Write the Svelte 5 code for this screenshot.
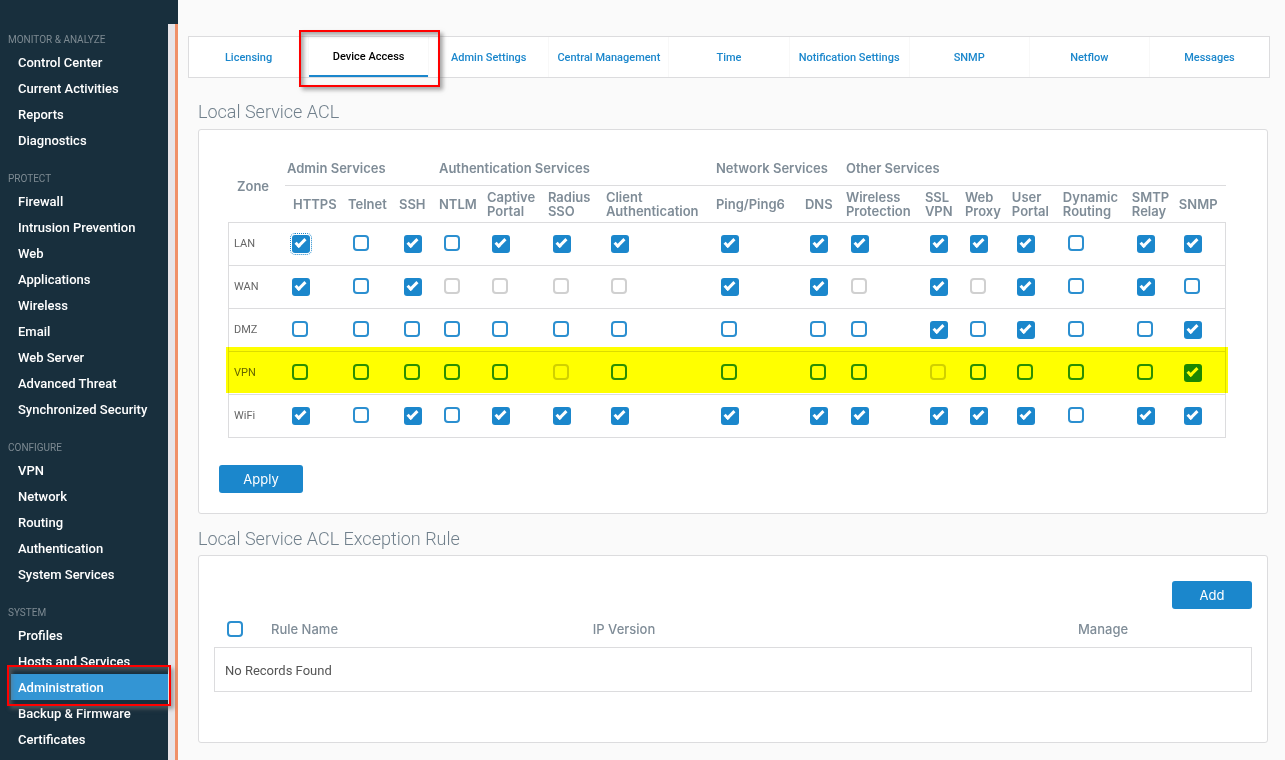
<script>
  const menu = [
    { title: 'Monitor & Analyze', items: ['Control Center', 'Current Activities', 'Reports', 'Diagnostics'] },
    {
      title: 'Protect',
      items: ['Firewall', 'Intrusion Prevention', 'Web', 'Applications', 'Wireless', 'Email', 'Web Server', 'Advanced Threat', 'Synchronized Security'],
    },
    { title: 'Configure', items: ['VPN', 'Network', 'Routing', 'Authentication', 'System Services'] },
    { title: 'System', items: ['Profiles', 'Hosts and Services', 'Administration', 'Backup & Firmware', 'Certificates'] },
  ]

  const tabs = ['Licensing', 'Device Access', 'Admin Settings', 'Central Management', 'Time', 'Notification Settings', 'SNMP', 'Netflow', 'Messages']

  const groups = [
    { label: 'Admin Services', span: 3 },
    { label: 'Authentication Services', span: 4 },
    { label: 'Network Services', span: 2 },
    { label: 'Other Services', span: 7 },
  ]

  const services = [
    { lines: ['HTTPS'], width: 57 },
    { lines: ['Telnet'], width: 51 },
    { lines: ['SSH'], width: 40 },
    { lines: ['NTLM'], width: 48 },
    { lines: ['Captive', 'Portal'], width: 61 },
    { lines: ['Radius', 'SSO'], width: 58 },
    { lines: ['Client', 'Authentication'], width: 110 },
    { lines: ['Ping/Ping6'], width: 89 },
    { lines: ['DNS'], width: 41 },
    { lines: ['Wireless', 'Protection'], width: 79 },
    { lines: ['SSL', 'VPN'], width: 40 },
    { lines: ['Web', 'Proxy'], width: 47 },
    { lines: ['User', 'Portal'], width: 51 },
    { lines: ['Dynamic', 'Routing'], width: 69 },
    { lines: ['SMTP', 'Relay'], width: 47 },
    { lines: ['SNMP'], width: 53 },
  ]
  const zoneWidth = 57
  const totalWidth = services.reduce((sum, s) => sum + s.width, zoneWidth)
  const share = (w) => `${(w / totalWidth) * 100}%`

  // x = allowed, o = not allowed, - = not available for the zone
  const zones = $state([
    { name: 'LAN', access: [...'xoxoxxxxxxxxxoxx'] },
    { name: 'WAN', access: [...'xox----xx-x-xoxo'] },
    { name: 'DMZ', access: [...'ooooooooooxoxoox'] },
    { name: 'VPN', access: [...'ooooo-oooo-oooox'] },
    { name: 'WiFi', access: [...'xoxoxxxxxxxxxoxx'] },
  ])

  let activeTab = $state('Device Access')
  let activeItem = $state('Administration')
  let selectAll = $state(false)

  function toggle(zone, i) {
    zone.access[i] = zone.access[i] === 'x' ? 'o' : 'x'
  }
</script>

<svelte:head>
  <title>Administration - Device Access</title>
</svelte:head>

<div class="page">
  <aside class="sidebar">
    <div class="sidebar-top"></div>
    <div class="sidebar-body">
      <nav class="menu" aria-label="Main menu">
        {#each menu as section}
          <section>
            <h3>{section.title}</h3>
            <ul>
              {#each section.items as item}
                <li class:active={item === activeItem}>
                  <a href="#menu" onclick={() => (activeItem = item)}>{item}</a>
                  {#if item === 'Administration'}
                    <span class="callout menu-callout"></span>
                  {/if}
                </li>
              {/each}
            </ul>
          </section>
        {/each}
      </nav>
    </div>
  </aside>

  <main>
    <nav class="tabs" aria-label="Administration">
      {#each tabs as tab}
        <div class="tab" class:active={tab === activeTab}>
          <a href="#tab" onclick={() => (activeTab = tab)}>{tab}</a>
          {#if tab === 'Device Access'}
            <span class="callout tab-callout"></span>
          {/if}
        </div>
      {/each}
    </nav>

    <div class="content">
      <h2>Local Service ACL</h2>
      <div class="panel">
        <div class="acl-wrap">
          <table class="acl">
            <colgroup>
              <col style:width={share(zoneWidth)} />
              {#each services as s}
                <col style:width={share(s.width)} />
              {/each}
            </colgroup>
            <thead>
              <tr>
                <th rowspan="2" class="zone">Zone</th>
                {#each groups as g, i}
                  <th colspan={g.span} class="group" class:first={i === 0}>{g.label}</th>
                {/each}
              </tr>
              <tr>
                {#each services as s, i}
                  <th class:first={i === 0}>
                    {#each s.lines as line}<span>{line}</span>{/each}
                  </th>
                {/each}
              </tr>
            </thead>
            <tbody>
              {#each zones as zone}
                <tr class:highlight={zone.name === 'VPN'}>
                  <td class="name">{zone.name}</td>
                  {#each zone.access as value, i}
                    <td class:first={i === 0}>
                      <input
                        type="checkbox"
                        class:focused={zone.name === 'LAN' && i === 0}
                        aria-label="{zone.name} {services[i].lines.join(' ')}"
                        checked={value === 'x'}
                        disabled={value === '-'}
                        onchange={() => toggle(zone, i)}
                      />
                    </td>
                  {/each}
                </tr>
              {/each}
            </tbody>
          </table>
        </div>
        <button class="apply">Apply</button>
      </div>

      <h2>Local Service ACL Exception Rule</h2>
      <div class="panel rules-panel">
        <div class="actions">
          <button>Add</button>
        </div>
        <table class="rules">
          <thead>
            <tr>
              <th class="check"><input type="checkbox" aria-label="Select all rules" bind:checked={selectAll} /></th>
              <th class="rule-name">Rule Name</th>
              <th>IP Version</th>
              <th class="manage">Manage</th>
            </tr>
          </thead>
          <tbody>
            <tr>
              <td colspan="4">No Records Found</td>
            </tr>
          </tbody>
        </table>
      </div>
    </div>
  </main>
</div>

<style>
  :global(body) {
    background: #fafafa;
    font-family: Roboto, 'Liberation Sans', sans-serif;
    font-size: 13px;
  }

  .page {
    display: flex;
    min-height: 100vh;
  }

  a { text-decoration: none; }

  /* Sidebar */
  .sidebar {
    width: 178px;
    flex-shrink: 0;
    display: flex;
    flex-direction: column;
  }

  .sidebar-top {
    height: 24px;
    background: #182f3d;
  }

  .sidebar-body {
    flex: 1;
    display: flex;
    background: #e7e4e8;
    border-right: 3px solid #f09068;
  }

  .menu {
    width: 168px;
    padding-top: 5px;
    background: #182f3d;
    box-sizing: border-box;
  }

  .menu section { margin-bottom: 15px; }
  .menu section:last-child { margin-bottom: 0; }

  .menu h3 {
    margin: 0;
    padding: 2px 0 0 8px;
    font-size: 10px;
    font-weight: 400;
    line-height: 18px;
    text-transform: uppercase;
    color: #7d8a92;
  }

  .menu ul {
    list-style: none;
    margin: 0 0 0 11px;
    padding: 0;
  }

  .menu li { position: relative; }
  .menu li.active { background: #3395d4; }

  .menu li a {
    display: block;
    padding: 2px 0 0 7px;
    line-height: 24px;
    font-weight: 500;
    color: #fff;
    white-space: nowrap;
  }

  .callout {
    position: absolute;
    z-index: 2;
    border: 2px solid #f00;
    box-shadow: 3px 3px 4px rgba(110, 110, 110, 0.6), inset 3px 3px 4px rgba(110, 110, 110, 0.6);
    pointer-events: none;
  }

  .menu-callout { inset: -9px -3px -6px -4px; }
  .tab-callout { inset: -7px -12px -10px -10px; }

  /* Tabs */
  main {
    flex: 1;
    min-width: 0;
    padding: 36px 15px 16px 10px;
  }

  .tabs {
    display: flex;
    border: 1px solid #dcdcde;
    background: #fff;
  }

  .tab {
    flex: 1 1 0;
    min-width: 0;
    position: relative;
    border-right: 1px solid #f8f8f8;
  }

  .tab:last-child { border-right: 0; }

  .tab a {
    display: block;
    padding-top: 2px;
    line-height: 38px;
    font-size: 11px;
    font-weight: 500;
    text-align: center;
    white-space: nowrap;
    color: #1b87cc;
  }

  .tab.active a {
    line-height: 36px;
    border-bottom: 2px solid #1b87cc;
    color: #000;
  }

  /* Panels */
  .content { margin: 0 2px 0 10px; }

  h2 {
    margin: 0;
    padding: 22px 0 5px;
    font-size: 18px;
    font-weight: 300;
    line-height: 24px;
    color: #71808c;
  }

  .panel + h2 { padding: 13px 0 4px; }

  .panel {
    padding: 20px;
    background: #fff;
    border: 1px solid #dcdcde;
    border-radius: 3px;
  }

  .acl-wrap { margin: 0 21px 27px 9px; }

  table {
    width: 100%;
    table-layout: fixed;
    border-spacing: 0;
  }

  th {
    font-family: Inter, Roboto, sans-serif;
    font-size: 13px;
    font-weight: 600;
    line-height: 14px;
    text-align: left;
    white-space: nowrap;
    color: #7f8c97;
  }

  .acl th {
    height: 36px;
    padding: 0 0 0 6px;
    box-sizing: border-box;
  }

  .acl th span { display: block; }
  .acl th.zone { padding-left: 9px; }
  .acl th.group { border-bottom: 1px solid #dcdcde; }
  .acl th.group.first { padding-left: 2px; }
  .acl th.first { padding-left: 8px; }

  .acl td {
    height: 43px;
    padding: 12px 0 0 11px;
    box-sizing: border-box;
    vertical-align: top;
    border-top: 1px solid #dcdcde;
  }

  .acl td.first { padding-left: 7px; }

  .acl td.name {
    padding: 0 0 2px 5px;
    vertical-align: middle;
    border-left: 1px solid #dcdcde;
    font-size: 11px;
    color: #666;
  }

  .acl td:last-child { border-right: 1px solid #dcdcde; }

  .acl tbody tr:last-child td {
    height: 44px;
    border-bottom: 1px solid #dcdcde;
  }

  .highlight { position: relative; }

  .highlight .name::after {
    content: '';
    position: absolute;
    z-index: 1;
    inset: -4px -2px 1px -2px;
    background: #ff0;
    mix-blend-mode: multiply;
    pointer-events: none;
  }

  input[type='checkbox'] {
    appearance: none;
    display: block;
    width: 16px;
    height: 16px;
    margin: 0;
    box-sizing: border-box;
    border: 2px solid #2b8fd0;
    border-radius: 4px;
    background: #fff;
  }

  input[type='checkbox']:disabled { border-color: #d0d0d0; }

  input[type='checkbox']:checked {
    position: relative;
    width: 18px;
    height: 18px;
    border: 0;
    border-radius: 3px;
    background: #1b87cc;
  }

  input[type='checkbox']:checked::after {
    content: '';
    position: absolute;
    left: 3px;
    top: 4px;
    width: 8px;
    height: 3px;
    border-left: 3px solid #fff;
    border-bottom: 3px solid #fff;
    transform: rotate(-45deg);
  }

  input.focused {
    outline: 1px dotted #1b87cc;
    outline-offset: 1px;
  }

  button {
    min-width: 80px;
    height: 28px;
    padding: 0 24px;
    border: 0;
    border-radius: 3px;
    background: #1b87cc;
    color: #fff;
    font-family: Inter, Roboto, sans-serif;
    font-size: 13px;
  }

  .apply {
    display: block;
    min-width: 84px;
  }

  /* Exception rules */
  .rules-panel { padding: 25px 15px 50px; }

  .actions {
    display: flex;
    justify-content: flex-end;
  }

  .rules th {
    height: 38px;
    padding: 2px 0 0 6px;
    box-sizing: border-box;
    font-weight: 500;
  }

  .rules th.check {
    width: 51px;
    padding-left: 13px;
  }

  .rules th.rule-name { width: 31%; }
  .rules th.manage { width: 180px; }

  .rules td {
    height: 45px;
    padding: 2px 10px 0;
    box-sizing: border-box;
    border: 1px solid #dcdcde;
    color: #555;
  }
</style>
